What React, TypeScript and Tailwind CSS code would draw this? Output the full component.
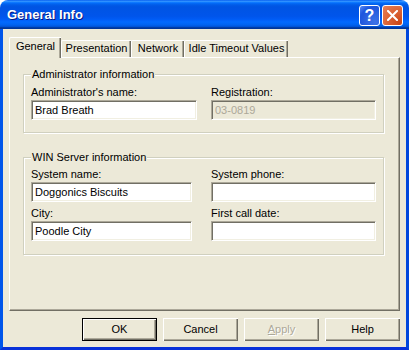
import React from "react";

const raised =
  "shadow-[inset_1px_1px_0_#ffffff,inset_-1px_-1px_0_#716f64,inset_-2px_-2px_0_#aca899]";

function Field({ value, width, disabled }: { value?: string; width: string; disabled?: boolean }) {
  return (
    <div
      className={`${width} mt-[1px] h-[20px] border border-t-[#aca899] border-l-[#aca899] border-r-white border-b-white shadow-[inset_1px_1px_0_#716f64,inset_-1px_-1px_0_#f1efe2] pl-[3px] flex items-center leading-[13px] ${
        disabled ? "bg-[#ece9d8] text-[#aca899]" : "bg-white text-black"
      }`}
    >
      {value}
    </div>
  );
}

function Label({ children, className = "" }: { children: React.ReactNode; className?: string }) {
  return <div className={`leading-[13px] ${className}`}>{children}</div>;
}

function Group({ title, titleGap, children }: { title: string; titleGap: string; children: React.ReactNode }) {
  return (
    <div className="border border-[#d0d0bf] shadow-[inset_1px_1px_0_#ffffff,1px_1px_0_#ffffff] pl-[7px] pr-[7px]">
      <div className="-mt-[7px] w-fit bg-[#ece9d8] px-[1px] leading-[13px]">{title}</div>
      <div className={titleGap}>{children}</div>
    </div>
  );
}

function Tab({ label, width, selected }: { label: string; width: string; selected?: boolean }) {
  if (selected) {
    return (
      <div
        className={`${width} h-[21px] relative z-10 -mb-[1px] bg-[#ece9d8] border-t border-l border-white rounded-tl-[2px] shadow-[inset_-1px_0_0_#716f64,inset_-2px_0_0_#aca899] flex justify-center pt-[2px] leading-[13px]`}
      >
        {label}
      </div>
    );
  }
  return (
    <div
      className={`${width} h-[17px] bg-[#ece9d8] border-t border-l border-white rounded-tl-[2px] shadow-[inset_-1px_0_0_#716f64,inset_-2px_0_0_#aca899] flex justify-center pt-[1px] leading-[13px]`}
    >
      {label}
    </div>
  );
}

function Btn({ label, def, disabled }: { label: React.ReactNode; def?: boolean; disabled?: boolean }) {
  return (
    <div
      className={`w-[75px] h-[23px] bg-[#ece9d8] ${raised} flex items-center justify-center leading-[13px] ${
        def ? "border border-black" : ""
      } ${disabled ? "text-[#aca899] [text-shadow:1px_1px_0_#ffffff]" : "text-black"}`}
    >
      {label}
    </div>
  );
}

export default function App() {
  return (
    <div className="w-[409px] h-[350px] bg-white font-['Liberation_Sans',Arial,sans-serif] text-[11px] text-black">
      <div className="w-full h-full flex flex-col rounded-t-[8px] overflow-hidden">
        {/* title bar */}
        <div className="h-[29px] shrink-0 flex items-center pl-[7px] pr-[6px] bg-[linear-gradient(to_bottom,#0058ee_0%,#3593ff_4%,#288eff_6%,#127dff_8%,#036ffc_10%,#0262ee_14%,#0057e5_20%,#0054e3_24%,#0055eb_56%,#005bf5_66%,#026afe_76%,#0062ef_86%,#0052d6_92%,#0040ab_94%,#003092_100%)]">
          <div className="flex-1 text-white font-bold text-[13px] leading-[16px] [text-shadow:1px_1px_0_#0a1883] pt-[1px]">
            General Info
          </div>
          <div className="flex gap-[2px] pt-[2px]">
            <div className="w-[21px] h-[21px] rounded-[3px] border border-white bg-[radial-gradient(circle_at_80%_85%,#3c71e7_0%,#2d63e0_40%,#1c55de_70%,#5b8cf5_100%)] flex items-center justify-center text-white font-bold text-[16px] leading-none">
              ?
            </div>
            <div className="w-[21px] h-[21px] rounded-[3px] border border-white bg-[radial-gradient(circle_at_90%_90%,#cc4616_0%,#dc6537_55%,#e5805a_100%)] flex items-center justify-center">
              <svg width="11" height="11" viewBox="0 0 11 11">
                <path d="M1 1 L10 10 M10 1 L1 10" stroke="#ffffff" strokeWidth="2" strokeLinecap="square" />
              </svg>
            </div>
          </div>
        </div>

        {/* body */}
        <div className="flex-1 flex flex-col bg-[#ece9d8] border-l-[3px] border-r-[3px] border-b-[3px] border-l-[#0055ea] border-r-[#0047dc] border-b-[#0831d9] px-[6px]">
          <div className="flex items-end mt-[7px] h-[21px]">
            <Tab label="General" width="w-[52px]" selected />
            <Tab label="Presentation" width="w-[70px]" />
            <Tab label="Network" width="w-[53px]" />
            <Tab label="Idle Timeout Values" width="w-[104px]" />
          </div>

          {/* tab page */}
          <div className="h-[254px] border-t border-l border-white border-r border-b border-r-[#716f64] border-b-[#716f64] shadow-[inset_-1px_-1px_0_#aca899] pl-[13px] pr-[15px] pt-[16px]">
            <Group title="Administrator information" titleGap="mt-[5px]">
              <div className="grid grid-cols-[166px_165px] gap-x-[14px] pb-[12px]">
                <div>
                  <Label>Administrator&apos;s name:</Label>
                  <Field value="Brad Breath" width="w-[166px]" />
                </div>
                <div>
                  <Label>Registration:</Label>
                  <Field value="03-0819" width="w-[165px]" disabled />
                </div>
              </div>
            </Group>

            <div className="h-[24px]" />

            <Group title="WIN Server information" titleGap="mt-[4px]">
              <div className="grid grid-cols-[180px_165px] pb-[13px]">
                <div>
                  <Label>System name:</Label>
                  <Field value="Doggonics Biscuits" width="w-[161px]" />
                  <Label className="mt-[5px]">City:</Label>
                  <Field value="Poodle City" width="w-[161px]" />
                </div>
                <div>
                  <Label>System phone:</Label>
                  <Field width="w-[165px]" />
                  <Label className="mt-[5px]">First call date:</Label>
                  <Field width="w-[165px]" />
                </div>
              </div>
            </Group>
          </div>

          {/* buttons */}
          <div className="flex justify-end gap-[6px] mt-[7px]">
            <Btn label="OK" def />
            <Btn label="Cancel" />
            <Btn
              label={
                <span>
                  <span className="underline">A</span>pply
                </span>
              }
              disabled
            />
            <Btn label="Help" />
          </div>
        </div>
      </div>
    </div>
  );
}
